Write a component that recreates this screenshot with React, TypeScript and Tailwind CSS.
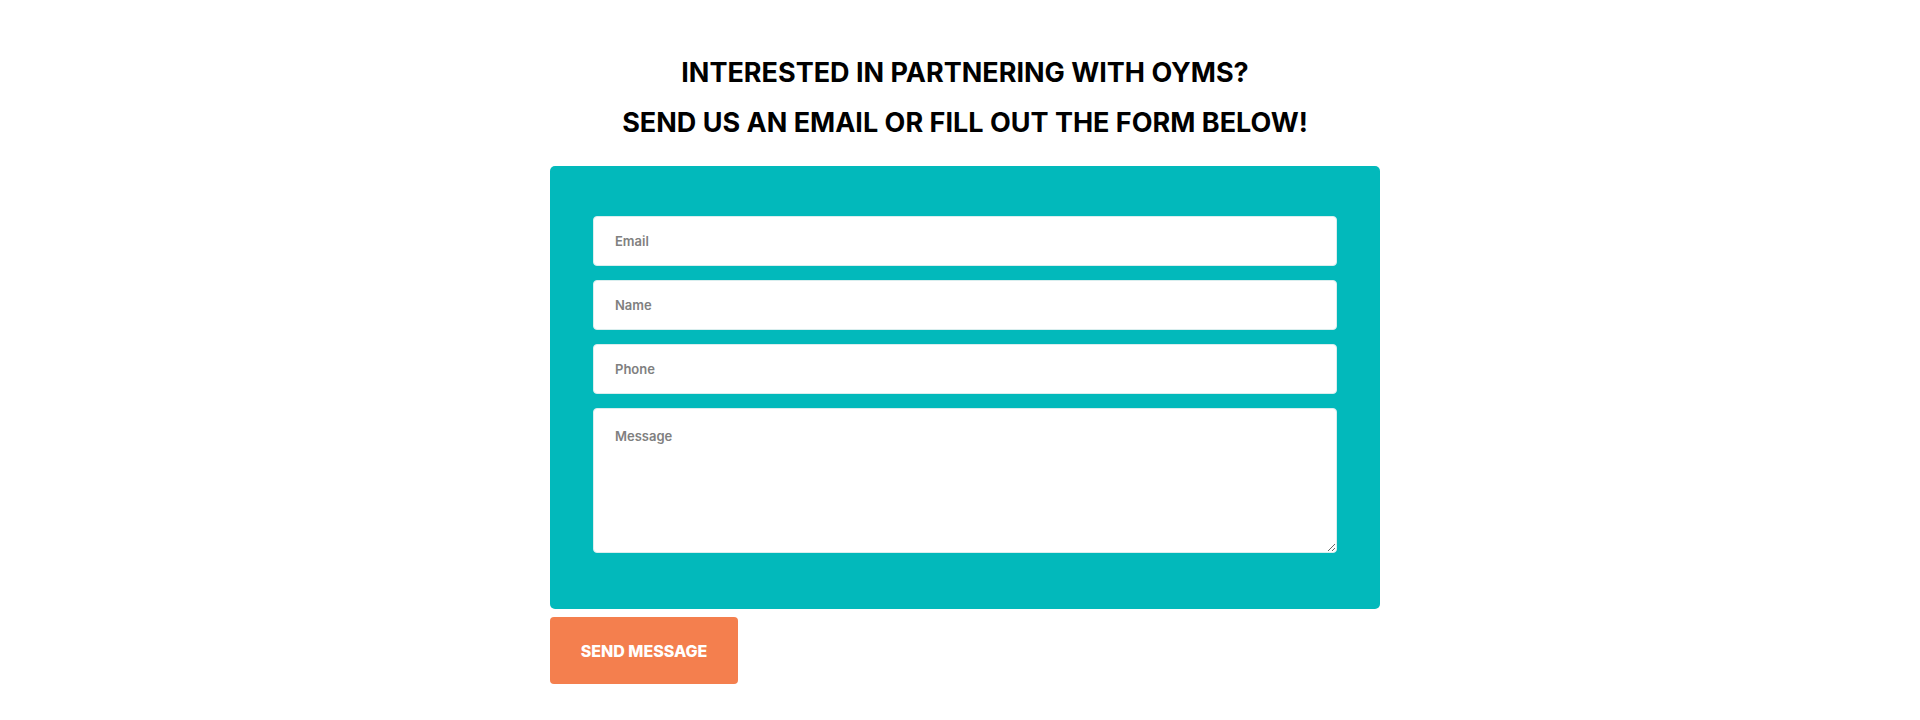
import type { InputHTMLAttributes } from "react";

const heading = "font-['Inter',sans-serif] text-[27px] font-bold uppercase leading-[50px] text-black";

function Field(props: InputHTMLAttributes<HTMLInputElement>) {
  return (
    <input
      {...props}
      className="h-[50px] w-full rounded-[4px] border border-[#d9eeee] bg-white px-[21px] font-['Inter',sans-serif] text-[13px] font-semibold text-gray-700 outline-none placeholder:text-[#808080]"
    />
  );
}

export default function App() {
  return (
    <div className="min-h-[720px] w-full bg-white pl-[10px] pt-[48px]">
      <div className="mx-auto flex w-[830px] flex-col">
        <h2 className={`${heading} text-center`}>Interested in partnering with OYMS?</h2>
        <h2 className={`${heading} text-center`}>Send us an email or fill out the form below!</h2>

        <form className="mt-[18px] flex flex-col gap-[14px] rounded-[5px] bg-[#02b9bb] px-[43px] pb-[56px] pt-[50px]">
          <Field type="email" placeholder="Email" />
          <Field type="text" placeholder="Name" />
          <Field type="tel" placeholder="Phone" />
          <textarea
            placeholder="Message"
            className="h-[145px] w-full rounded-[4px] border border-[#d9eeee] bg-white px-[21px] py-[18px] font-['Inter',sans-serif] text-[13px] font-semibold text-gray-700 outline-none placeholder:text-[#808080]"
          />
        </form>

        <button
          type="button"
          className="mt-[8px] h-[67px] w-[188px] rounded-[4px] bg-[#f47f4e] font-['Inter',sans-serif] text-[16px] font-extrabold uppercase text-white"
        >
          Send Message
        </button>
      </div>
    </div>
  );
}
